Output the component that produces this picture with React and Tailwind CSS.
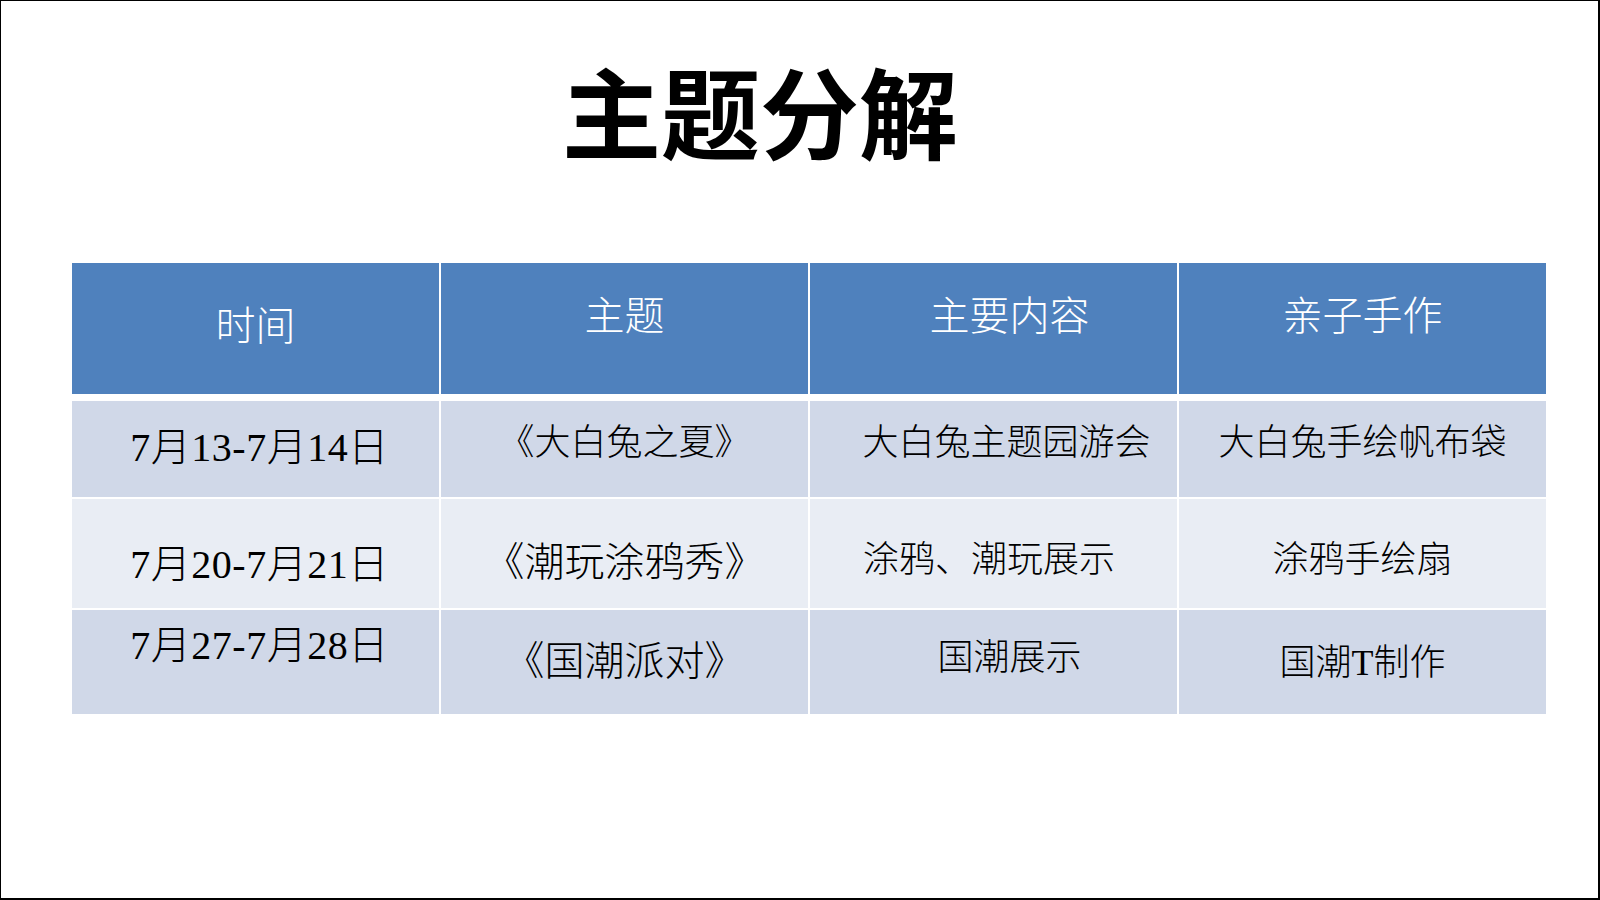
import React from "react";

const header = [
  { text: "时间", cls: "pt-[44px]" },
  { text: "主题", cls: "pt-[34px]" },
  { text: "主要内容", cls: "pt-[34px] pl-[32px]" },
  { text: "亲子手作", cls: "pt-[34px]" },
];

const rows = [
  {
    bg: "bg-[#d0d8e8]",
    h: "h-[96px]",
    cells: [
      { text: "7月13-7月14日", cls: "pt-[27px] pl-[8px] text-[40px] tracking-[0.5px]" },
      { text: "《大白兔之夏》", cls: "pt-[24px] text-[36px]" },
      { text: "大白兔主题园游会", cls: "pt-[24px] pl-[26px] text-[36px]" },
      { text: "大白兔手绘帆布袋", cls: "pt-[24px] text-[36px]" },
    ],
  },
  {
    bg: "bg-[#e9edf4]",
    h: "h-[109px]",
    cells: [
      { text: "7月20-7月21日", cls: "pt-[46px] pl-[8px] text-[40px] tracking-[0.5px]" },
      { text: "《潮玩涂鸦秀》", cls: "pt-[44px] text-[40px]" },
      { text: "涂鸦、潮玩展示", cls: "pt-[43px] pr-[9px] text-[36px]" },
      { text: "涂鸦手绘扇", cls: "pt-[43px] text-[36px]" },
    ],
  },
  {
    bg: "bg-[#d0d8e8]",
    h: "h-[104px]",
    cells: [
      { text: "7月27-7月28日", cls: "pt-[16px] pl-[8px] text-[40px] tracking-[0.5px]" },
      { text: "《国潮派对》", cls: "pt-[32px] text-[40px]" },
      { text: "国潮展示", cls: "pt-[30px] pl-[32px] text-[36px]" },
      { text: "国潮T制作", cls: "pt-[35px] text-[36px]" },
    ],
  },
];

export default function App() {
  return (
    <div className="w-[1600px] h-[900px] bg-white border-l border-t border-r-2 border-b-2 border-black overflow-hidden">
      {/* title */}
      <div className="flex justify-center pr-[79px] pt-[59px]">
        <h1 className="text-[99px] leading-none font-bold text-black font-['Noto_Sans_CJK_SC',sans-serif]">
          主题分解
        </h1>
      </div>

      {/* table */}
      <div className="ml-[71px] mt-[104px] w-[1474px] flex flex-col font-['Liberation_Serif','Noto_Sans_CJK_SC',serif] font-light leading-none">
        <div className="grid grid-cols-4 gap-x-[2px] h-[131px]">
          {header.map((c) => (
            <div
              key={c.text}
              className={`bg-[#4f81bd] text-white text-[40px] flex justify-center ${c.cls}`}
            >
              <span>{c.text}</span>
            </div>
          ))}
        </div>
        <div className="flex flex-col gap-y-[2px] mt-[7px]">
          {rows.map((r, i) => (
            <div key={i} className={`grid grid-cols-4 gap-x-[2px] ${r.h}`}>
              {r.cells.map((c) => (
                <div
                  key={c.text}
                  className={`${r.bg} text-black flex justify-center whitespace-nowrap ${c.cls}`}
                >
                  <span>{c.text}</span>
                </div>
              ))}
            </div>
          ))}
        </div>
      </div>
    </div>
  );
}
